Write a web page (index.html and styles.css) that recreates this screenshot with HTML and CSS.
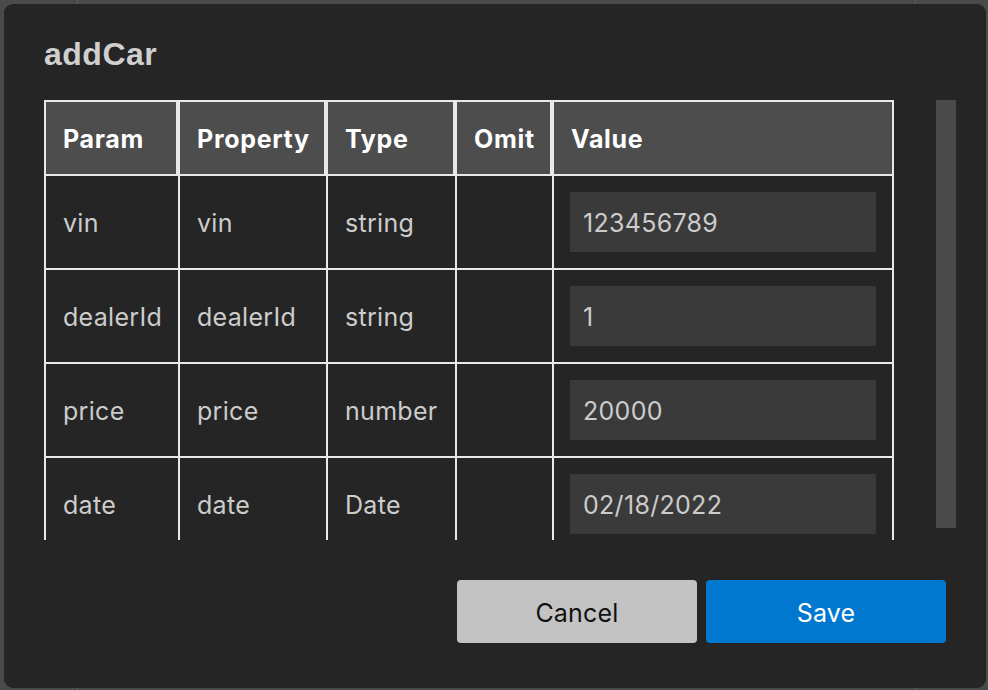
FILE: index.html
```html
<!DOCTYPE html>
<html>
<head>
<meta charset="utf-8">
<link rel="stylesheet" href="styles.css">
</head>
<body>
<div class="dialog">
  <h1 class="title">addCar</h1>
  <div class="scrollarea">
    <div class="viewport">
      <table class="params">
        <colgroup>
          <col class="c1"><col class="c2"><col class="c3"><col class="c4"><col class="c5">
        </colgroup>
        <thead>
          <tr><th>Param</th><th>Property</th><th>Type</th><th>Omit</th><th>Value</th></tr>
        </thead>
        <tbody>
          <tr><td>vin</td><td>vin</td><td>string</td><td></td><td><div class="input">123456789</div></td></tr>
          <tr><td>dealerId</td><td>dealerId</td><td>string</td><td></td><td><div class="input">1</div></td></tr>
          <tr><td>price</td><td>price</td><td>number</td><td></td><td><div class="input">20000</div></td></tr>
          <tr><td>date</td><td>date</td><td>Date</td><td></td><td><div class="input">02/18/2022</div></td></tr>
        </tbody>
      </table>
    </div>
    <div class="scrollbar"><div class="thumb"></div></div>
  </div>
  <div class="actions">
    <button class="btn cancel">Cancel</button>
    <button class="btn save">Save</button>
  </div>
</div>
</body>
</html>
```
FILE: styles.css
```css
html, body {
  margin: 0;
  padding: 0;
}
body {
  width: 988px;
  height: 690px;
  overflow: hidden;
  background-color: #4a4a4a;
  background-image:
    linear-gradient(to right, transparent 77px, #5e5e5e 77px, #5e5e5e 78px, transparent 78px),
    linear-gradient(to right, transparent 915px, #5e5e5e 915px, #5e5e5e 916px, transparent 916px);
  padding-top: 4px;
  padding-left: 4px;
  box-sizing: border-box;
}
.dialog {
  width: 982px;
  height: 684px;
  box-sizing: border-box;
  background: #252525;
  border-radius: 9px;
  padding: 32px 40px 0 40px;
  display: flex;
  flex-direction: column;
}
.title {
  margin: 0;
  font-family: "Liberation Sans", Arial, sans-serif;
  font-weight: 700;
  font-size: 32px;
  line-height: 36px;
  letter-spacing: 0.5px;
  color: #cfcfcf;
}
.scrollarea {
  margin-top: 28px;
  height: 440px;
  width: 912px;
  display: flex;
}
.viewport {
  flex: none;
  width: 892px;
  height: 440px;
  overflow: hidden;
}
.scrollbar {
  flex: none;
  width: 20px;
  height: 440px;
}
.thumb {
  height: 428px;
  background: #4a4a4a;
}
.params {
  width: 850px;
  table-layout: fixed;
  border-collapse: separate;
  border-spacing: 0;
  font-family: Inter, "Noto Sans", sans-serif;
  font-size: 25px;
  letter-spacing: 0.3px;
}
.c1 { width: 134px; }
.c2 { width: 148px; }
.c3 { width: 129px; }
.c4 { width: 97px; }
.c5 { width: 342px; }
.params th {
  height: 76px;
  box-sizing: border-box;
  background: #4d4d4d;
  border: 2px solid #e8e8e8;
  color: #ffffff;
  font-weight: 700;
  letter-spacing: 0.7px;
  text-align: left;
  padding: 2px 0 0 17px;
}
.params td {
  height: 94px;
  box-sizing: border-box;
  border-left: 2px solid #e8e8e8;
  border-bottom: 2px solid #e8e8e8;
  color: #cccccc;
  padding: 2px 0 0 17px;
  vertical-align: middle;
}
.params td:last-child {
  border-right: 2px solid #e8e8e8;
  padding: 16px;
}
.input {
  height: 60px;
  box-sizing: border-box;
  background: #3a3a3a;
  padding: 2px 0 0 13px;
  display: flex;
  align-items: center;
  color: #cccccc;
}
.actions {
  margin-top: 40px;
  display: flex;
  justify-content: flex-end;
  gap: 9px;
}
.btn {
  width: 240px;
  height: 63px;
  border: none;
  border-radius: 4px;
  font-family: Inter, "Noto Sans", sans-serif;
  font-size: 25px;
  letter-spacing: 0.2px;
  padding: 2px 0 0 0;
}
.cancel {
  background: #c3c3c3;
  color: #111111;
}
.save {
  background: #0078d0;
  color: #ffffff;
}
```
